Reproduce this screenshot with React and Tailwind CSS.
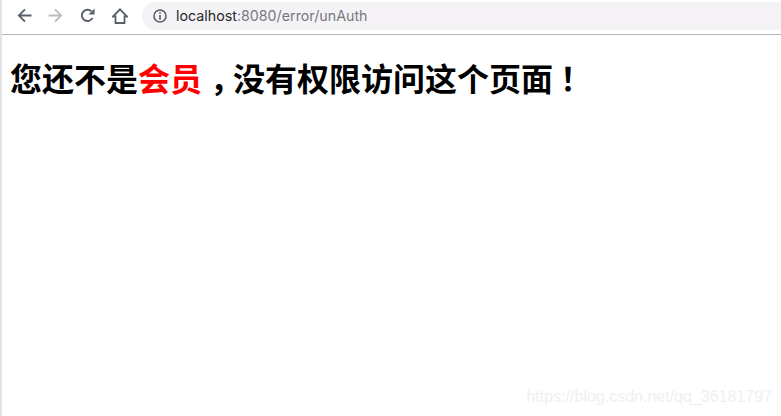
import React from 'react';

const Back = ({ className }) => (
  <svg className={className} viewBox="0 0 16 16" fill="none" stroke="currentColor" strokeWidth="2">
    <path d="M15.5 8H2M8.5 1.5L2 8l6.5 6.5" />
  </svg>
);

const Forward = ({ className }) => (
  <svg className={className} viewBox="0 0 16 16" fill="none" stroke="currentColor" strokeWidth="2">
    <path d="M.5 8H14M7.5 1.500L14 8l-6.500 6.500" />
  </svg>
);

const Reload = ({ className }) => (
  <svg className={className} viewBox="0 0 16 16" fill="none">
    <path d="M13.4 10.500A6 6 0 1 1 12.200 3.600" stroke="currentColor" strokeWidth="2" />
    <path d="M15.500 .5v6.500H9z" fill="currentColor" />
  </svg>
);

const Home = ({ className }) => (
  <svg className={className} viewBox="0 0 16 16" fill="none" stroke="currentColor" strokeWidth="1.8">
    <path d="M1 8.500L8 1.300l7 7.200h-2.500V15h-9V8.500z" />
  </svg>
);

const Info = ({ className }) => (
  <svg className={className} viewBox="0 0 14 14" fill="none">
    <circle cx="7" cy="7" r="6" stroke="currentColor" strokeWidth="1.500" />
    <path d="M6.200 3.200h1.600v1.600H6.200zM6.200 6h1.600v4.800H6.200z" fill="currentColor" />
  </svg>
);

const App = () => {
  return (
    <div className="relative flex h-[416px] w-[781px] overflow-hidden bg-white font-['Liberation_Sans','Noto_Sans_CJK_SC',sans-serif]">
      <div className="w-[2px] shrink-0 bg-[#dfe3e7]" />
      <div className="flex min-w-0 flex-1 flex-col">
        <div className="flex h-[35px] items-center border-b border-[#b4b6b8] pb-[3px]">
          <Back className="ml-[15px] h-[15px] w-[15px] text-[#5a6068]" />
          <Forward className="ml-[16px] h-[15px] w-[15px] text-[#bcbdbf]" />
          <Reload className="ml-[17px] h-[15px] w-[15px] text-[#5a6068]" />
          <Home className="ml-[17px] h-[16px] w-[16px] text-[#5a6068]" />
          <div className="ml-[14px] flex h-[28px] flex-1 items-center rounded-l-full bg-[#f6f3f7] pl-[11px]">
            <Info className="h-[14px] w-[14px] text-[#55595f]" />
            <span className="ml-[9px] font-['Inter','Liberation_Sans',sans-serif] text-[14.25px] text-[#75787d]">
              <span className="text-[#26282b]">localhost</span>:8080/error/unAuth
            </span>
          </div>
        </div>
        <h1 className="mt-[25px] pl-[8px] text-[32px] leading-[40px] font-bold text-black">
          您还不是<span className="text-[#ff0000]">会员</span>
          <span className="pl-[8px] tracking-[-9px]">，</span>没有权限访问这个页面
          <span className="pl-[7px]">！</span>
        </h1>
      </div>
      <span className="absolute right-[9px] bottom-[10px] text-[16px] leading-[18px] text-[#f0f0f0]">
        https://blog.csdn.net/qq_36181797
      </span>
    </div>
  );
};

export default App;
